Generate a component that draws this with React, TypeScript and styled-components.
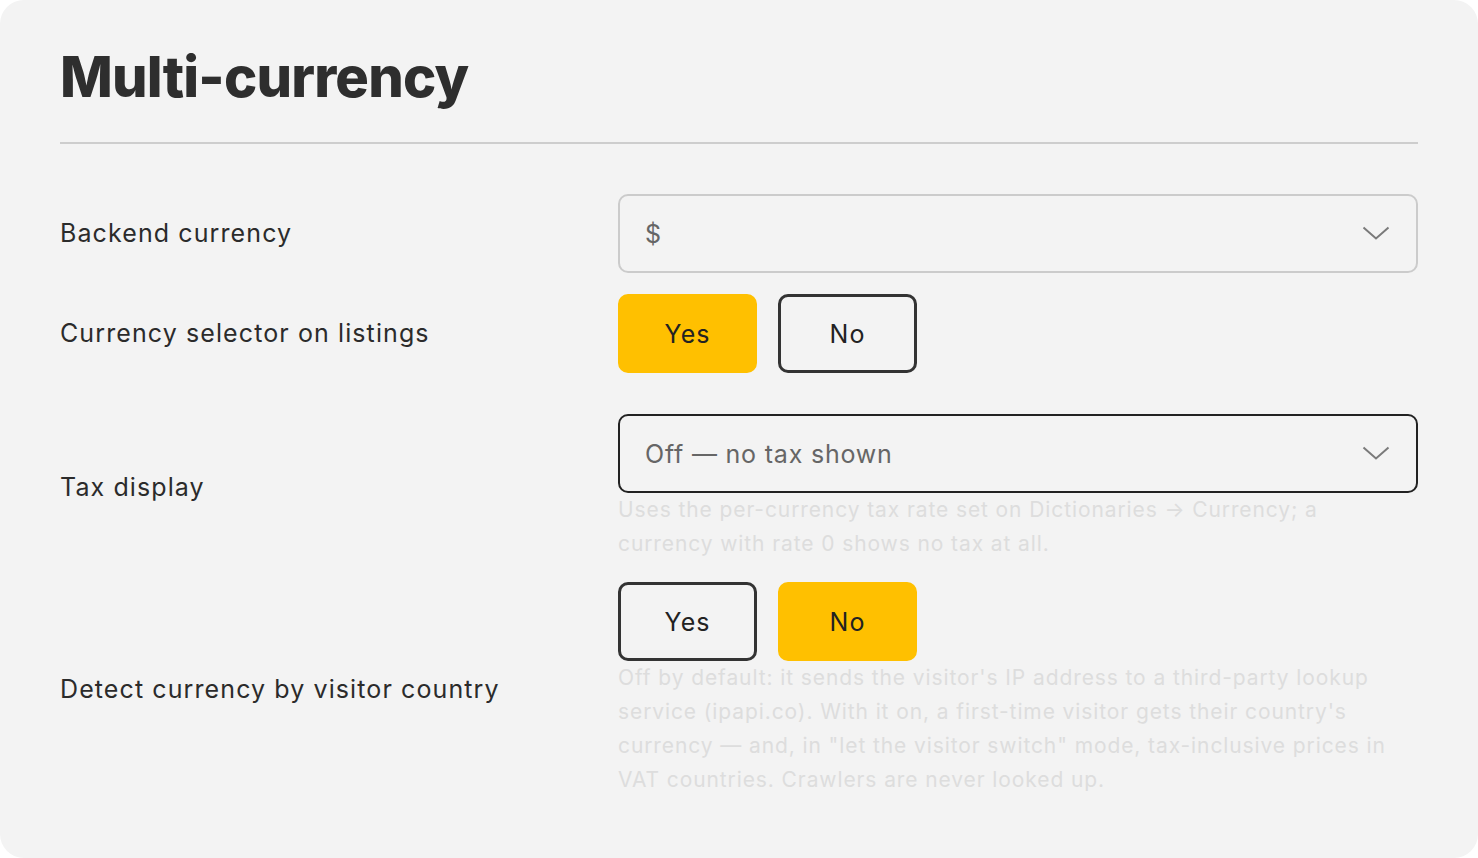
import React from "react";
import styled, { createGlobalStyle } from "styled-components";

const GlobalStyle = createGlobalStyle`
  html, body {
    margin: 0;
    padding: 0;
    background: #ffffff;
  }
  body {
    font-family: Inter, "Noto Sans", sans-serif;
    color: #2b2b2b;
  }
`;

const Chevron = () => (
  <svg width="28" height="16" viewBox="0 0 28 16" fill="none">
    <path d="M1.5 1.5 L14 12.5 L26.5 1.5" stroke="#7a7a7a" strokeWidth="2" />
  </svg>
);

const App = () => {
  return (
    <>
      <GlobalStyle />
      <Card>
        <Title>Multi-currency</Title>
        <Divider />
        <Rows>
          <Row>
            <Label>Backend currency</Label>
            <Control>
              <Select>
                <SelectValue>$</SelectValue>
                <Chevron />
              </Select>
            </Control>
          </Row>
          <Row>
            <Label>Currency selector on listings</Label>
            <Control>
              <Toggle>
                <ToggleButton $active>Yes</ToggleButton>
                <ToggleButton>No</ToggleButton>
              </Toggle>
            </Control>
          </Row>
          <Row $spaced>
            <Label>Tax display</Label>
            <Control>
              <Select $strong>
                <SelectValue>Off — no tax shown</SelectValue>
                <Chevron />
              </Select>
              <Help>
                Uses the per-currency tax rate set on Dictionaries → Currency; a
                currency with rate 0 shows no tax at all.
              </Help>
            </Control>
          </Row>
          <Row>
            <Label>Detect currency by visitor country</Label>
            <Control>
              <Toggle>
                <ToggleButton>Yes</ToggleButton>
                <ToggleButton $active>No</ToggleButton>
              </Toggle>
              <Help>
                Off by default: it sends the visitor's IP address to a third-party
                lookup service (ipapi.co). With it on, a first-time visitor gets
                their country's currency — and, in "let the visitor switch" mode,
                tax-inclusive prices in VAT countries. Crawlers are never looked up.
              </Help>
            </Control>
          </Row>
        </Rows>
      </Card>
    </>
  );
};

export default App;

const Card = styled.div`
  box-sizing: border-box;
  width: 1478px;
  height: 858px;
  background: #f3f3f3;
  border-radius: 24px;
  padding: 44px 60px 60px;
  overflow: hidden;
`;

const Title = styled.h1`
  margin: 0;
  font-size: 56px;
  font-weight: 800;
  line-height: 66px;
  color: #2e2e2e;
  letter-spacing: -0.8px;
`;

const Divider = styled.hr`
  margin: 32px 0 50px;
  border: 0;
  border-top: 2px solid #cdcdcd;
`;

const Rows = styled.div`
  display: flex;
  flex-direction: column;
  gap: 21px;
`;

const Row = styled.div<{ $spaced?: boolean }>`
  display: grid;
  grid-template-columns: 558px 800px;
  align-items: center;
  margin-top: ${(p) => (p.$spaced ? "20px" : "0")};
`;

const Label = styled.div`
  font-size: 25px;
  letter-spacing: 1.1px;
  line-height: 30px;
  margin-top: -2px;
  color: #2b2b2b;
`;

const Control = styled.div`
  display: flex;
  flex-direction: column;
`;

const Select = styled.div<{ $strong?: boolean }>`
  box-sizing: border-box;
  height: 79px;
  display: flex;
  align-items: center;
  justify-content: space-between;
  padding: 0 26px 0 25px;
  border: 2px solid ${(p) => (p.$strong ? "#222" : "#cbcbcb")};
  border-radius: 10px;
`;

const SelectValue = styled.span`
  font-size: 25px;
  letter-spacing: 0.8px;
  color: #666;
`;

const Toggle = styled.div`
  display: flex;
  gap: 21px;
`;

const ToggleButton = styled.button<{ $active?: boolean }>`
  box-sizing: border-box;
  width: 139px;
  height: 79px;
  border-radius: 10px;
  font-family: inherit;
  font-size: 25px;
  letter-spacing: 1px;
  color: #222;
  cursor: pointer;
  background: ${(p) => (p.$active ? "#ffc000" : "transparent")};
  border: 3px solid ${(p) => (p.$active ? "#ffc000" : "#333")};
`;

const Help = styled.p`
  margin: 0;
  font-size: 21px;
  letter-spacing: 0.9px;
  line-height: 34px;
  color: #dddddd;
  max-width: 800px;
`;
